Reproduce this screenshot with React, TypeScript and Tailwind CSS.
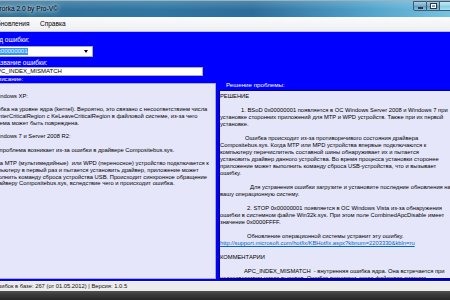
import React from "react";

const leftLines: string[] = [
  "В Windows XP:",
  "",
  "Ошибка на уровне ядра (kernel). Вероятно, это связано с несоответствием числа",
  "KeEnterCriticalRegion с KeLeaveCriticalRegion в файловой системе, из-за чего",
  "система может быть повреждена.",
  "",
  "В Windows 7 и Server 2008 R2:",
  "",
  "Эта проблема возникает из-за ошибки в драйвере Compositebus.sys.",
  "",
  "Когда MTP (мультимедийные)  или WPD (переносное) устройство подключается к",
  "компьютеру в первый раз и пытается установить драйвер, приложение может",
  "выполнить команду сброса устройства USB. Происходит синхронное обращение",
  "к драйверу Compositebus.sys, вследствие чего и происходит ошибка.",
];

type RL = { t: string; i?: number; link?: boolean };

const rightLines: RL[] = [
  { t: "РЕШЕНИЕ" },
  { t: "" },
  { t: "1. BSoD 0x00000001 появляется в ОС Windows Server 2008 и Windows 7 при", i: 21 },
  { t: "установке сторонних приложений для MTP и WPD устройств. Также при их первой" },
  { t: "установке." },
  { t: "" },
  { t: "Ошибка происходит из-за противоречивого состояния драйвера", i: 25 },
  { t: "Compositebus.sys. Когда MTP или MPD устройства впервые подключаются к" },
  { t: "компьютеру перечислитель составной шины обнаруживает их и пытается" },
  { t: "установить драйвер данного устройства. Во время процесса установки сторонее" },
  { t: "приложение может выполнить команду сброса USB-устройства, что и вызывает" },
  { t: "ошибку." },
  { t: "" },
  { t: "Для устранения ошибки загрузите и установите последние обновления на", i: 30 },
  { t: "вашу операционную систему." },
  { t: "" },
  { t: "2. STOP 0x00000001 появляется в ОС Windows Vista из-за обнаружения", i: 27 },
  { t: "ошибки в системном файле Win32k.sys. При этом поле CombinedApcDisable имеет" },
  { t: "значение 0x0000FFFF." },
  { t: "" },
  { t: "Обновление операционной системы устранит эту ошибку.", i: 27 },
  { t: "http://support.microsoft.com/hotfix/KBHotfix.aspx?kbnum=2203330&kbln=ru", link: true },
  { t: "" },
  { t: "КОММЕНТАРИИ" },
  { t: "" },
  { t: "APC_INDEX_MISMATCH  - внутренняя ошибка ядра. Она встречается при", i: 24 },
  { t: "несоответствии числа вызовов. Ошибка возникает, когда файловая система" },
];

export default function App() {
  return (
    <div className="w-[450px] h-[300px] overflow-hidden bg-[#0000ff] font-['Liberation_Sans',Arial,sans-serif]">
      <div className="-ml-[12px] w-[480px] h-[300px] flex flex-col">
        {/* Title bar */}
        <div className="h-[17px] flex items-start bg-[linear-gradient(180deg,rgba(255,255,255,0.18)_0%,rgba(255,255,255,0)_55%),linear-gradient(90deg,#2f6f97_0%,#2f76a2_35%,#2c6e9b_55%,#4f9fc8_78%,#7ccbe6_100%)] border-t border-[#9ab4c4]">
          <div className="pl-[5px] pt-[3px] text-[6.6px] leading-[9px] text-black [text-shadow:0_0_3px_#e6f4fb,0_0_6px_#d3ecf7,0_0_9px_#cde9f5]">
            Errorka 2.0 by Pro-V©
          </div>
          <div className="ml-auto mr-[4px] flex h-[10px]">
            <div className="w-[14px] h-full border border-[#3c5a70] rounded-bl-[2px] bg-[linear-gradient(180deg,#a9cfe2_0%,#78afcc_45%,#5c98bb_50%,#86c3dd_100%)] flex items-center justify-center">
              <div className="w-[5px] h-[2px] mt-[3px] bg-white border-[0.5px] border-[#334]" />
            </div>
            <div className="w-[13px] h-full border-y border-r border-[#3c5a70] bg-[linear-gradient(180deg,#a9cfe2_0%,#78afcc_45%,#5c98bb_50%,#86c3dd_100%)] flex items-center justify-center">
              <div className="w-[5px] h-[4px] border border-white outline outline-[0.5px] outline-[#334]" />
            </div>
            <div className="w-[24px] h-full border-y border-r border-[#3c5a70] rounded-br-[2px] bg-[linear-gradient(180deg,#c4e8f4_0%,#9ed7ea_45%,#86cbe3_50%,#a8e0f0_100%)]" />
          </div>
        </div>

        {/* Menu bar */}
        <div className="h-[14px] flex items-center bg-[linear-gradient(180deg,#fbfbfc_0%,#f3f4f6_60%,#eceef2_100%)] text-[6.5px] text-black">
          <div className="pl-[4px] w-[52px]">Обновления</div>
          <div>Справка</div>
        </div>
        <div className="h-px bg-[#b8b8ea]" />

        {/* Blue form */}
        <div className="flex-1 flex flex-col bg-[#0000ff] text-white">
          <div className="pt-[4px] pl-[4px] h-[11px] text-[6.5px] leading-[7px]">Код ошибки:</div>
          <div className="mt-[3px] ml-[2px] w-[103px] h-[11px] bg-white border border-[#a5acb5] flex items-center pl-[3px] pr-[3px]">
            <span className="bg-[#3399ff] text-white text-[6px] leading-[7px] px-[0.5px]">0x00000001</span>
            <div className="ml-auto w-0 h-0 border-l-[2.5px] border-r-[2.5px] border-t-[3px] border-l-transparent border-r-transparent border-t-black mr-[1px]" />
          </div>
          <div className="mt-[2px] pl-[4px] h-[7px] text-[6.5px] leading-[7px]">Название ошибки:</div>
          <div className="mt-[1px] ml-[2px] w-[213px] h-[9px] bg-white border border-[#abadb3] pl-[2px] text-black text-[6px] leading-[7px]">
            APC_INDEX_MISMATCH
          </div>

          <div className="flex items-start">
            {/* Left column */}
            <div className="flex flex-col -ml-[2px] w-[230px]">
              <div className="pl-[7px] h-[6px] text-[6.2px] leading-[6px]">Описание:</div>
              <div className="mt-[1px] h-[196px] bg-[#e6e6fa] border border-[#a9a9c4] text-black text-[5.8px] overflow-hidden pt-[8.5px] pl-[1px]">
                {leftLines.map((l, k) => (
                  <div key={k} className="h-[6.75px] leading-[6.75px] whitespace-pre">
                    {l || "\u00a0"}
                  </div>
                ))}
              </div>
            </div>
            <div className="w-[3px]" />
            {/* Right column */}
            <div className="flex flex-col flex-1">
              <div className="mt-[6px] pl-[7px] h-[6px] text-[6.2px] leading-[6px]">Решение проблемы:</div>
              <div className="mt-[2px] h-[190px] bg-[#e6e6fa] border-l border-t border-[#00008b] border-b-2 border-b-[#0000a0] text-black text-[5.8px] overflow-hidden pt-[2px]">
                {rightLines.map((l, k) => (
                  <div
                    key={k}
                    className={
                      "h-[7px] leading-[7px] whitespace-pre " +
                      (l.link ? "text-[#0066cc] underline" : "")
                    }
                    style={l.i ? { paddingLeft: l.i } : undefined}
                  >
                    {l.t || "\u00a0"}
                  </div>
                ))}
              </div>
            </div>
          </div>
        </div>

        {/* Status bar */}
        <div className="h-[10px] bg-[#ececec] border-t border-[#fafafa] flex items-center pl-[4px] text-[5.8px] text-[#111]">
          Ошибок в базе: 267 (от 01.05.2012) | Версия: 1.0.5
        </div>
        <div className="h-[9px] bg-[linear-gradient(180deg,#505050_0%,#3a3a3a_40%,#262626_100%)]" />
      </div>
    </div>
  );
}
